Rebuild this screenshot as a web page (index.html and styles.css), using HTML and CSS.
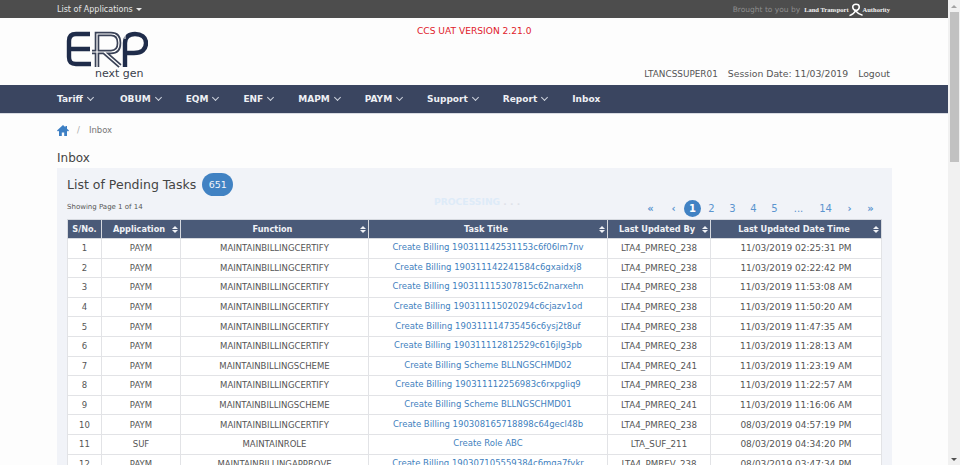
FILE: index.html
```html
<!DOCTYPE html>
<html lang="en">
<head>
  <meta charset="UTF-8" />
  <title>Inbox</title>
  <link rel="stylesheet" href="styles.css">
</head>
<body>
<div class="window">
  <div class="page">
    <div class="topbar">
      <span class="app-list">List of Applications <i class="caret"></i></span>
      <span class="brought">Brought to you by
        <span class="lta">Land Transport
          <svg class="lta-mark" width="14" height="15" viewBox="0 0 16 15">
            <path d="M8 9C3 7 3 1.5 8 1.5S13 7 8 9" fill="none" stroke="#fff" stroke-width="1.7"/>
            <path d="M0.5 14.5C4 13.5 6.5 11 8.5 8M15.5 14C11.5 13 9 11 6.5 8" fill="none" stroke="#fff" stroke-width="1.7"/>
          </svg>Authority</span>
      </span>
    </div>

    <header class="masthead">
      <div class="logo">
        <svg width="82" height="38" viewBox="0 0 82 38">
          <path d="M24 3H10C5 3 3 6 3 10V26C3 31 5 33 10 33H25M3 18H24" fill="none" stroke="#1f2c4a" stroke-width="4.4"/>
          <path d="M31 36V3H45C50 3 53 6 53 12S50 21 45 21H26M38 21L54 35" fill="none" stroke="#3a4257" stroke-width="4.6"/>
          <path d="M31 36V3H45C50 3 53 6 53 12S50 21 45 21H26M38 21L54 35" fill="none" stroke="#fff" stroke-width="1.2"/>
          <path d="M59 36V12C59 6 63 3 69 3S80 6 80 12 76 22 68 22H60" fill="none" stroke="#1f2c4a" stroke-width="4.4"/>
          <path d="M59 8V1" stroke="#fff" stroke-width="1"/>
        </svg>
        <span class="logo-sub">next gen</span>
      </div>
      <div class="version">CCS UAT VERSION 2.21.0</div>
      <div class="session">
        <span class="user">LTANCSSUPER01</span>
        <span>Session Date: 11/03/2019</span>
        <span>Logout</span>
      </div>
    </header>

    <nav class="mainnav">
      <a class="has-sub">Tariff</a>
      <a class="has-sub">OBUM</a>
      <a class="has-sub">EQM</a>
      <a class="has-sub">ENF</a>
      <a class="has-sub">MAPM</a>
      <a class="has-sub">PAYM</a>
      <a class="has-sub">Support</a>
      <a class="has-sub">Report</a>
      <a>Inbox</a>
    </nav>

    <main class="content">
      <div class="breadcrumb">
        <svg width="12" height="11" viewBox="0 0 12 11"><path d="M6 0L0 5.6 1 6.6 2 5.7V11H4.8V7.4H7.2V11H10V5.7L11 6.6 12 5.6 10 3.7V1H8.4V2.3Z" fill="#3d7fc4"/></svg>
        <span class="sep">/</span>
        <span>Inbox</span>
      </div>
      <h1 class="page-title">Inbox</h1>

      <section class="panel">
        <div class="panel-head">
          <h2>List of Pending Tasks</h2>
          <span class="count">651</span>
        </div>
        <div class="table-tools">
          <span class="showing">Showing Page 1 of 14</span>
          <span class="processing">PROCESSING <span class="dots">. . .</span></span>
          <div class="pager">
            <a class="nav first">«</a><a class="nav">‹</a><a class="current">1</a><a>2</a><a>3</a><a>4</a><a>5</a><a class="wide">...</a><a class="wide">14</a><a class="nav">›</a><a class="nav">»</a>
          </div>
        </div>
        <table class="tasks">
          <colgroup>
            <col class="c-no"><col class="c-app"><col class="c-fn"><col class="c-title"><col class="c-by"><col class="c-date">
          </colgroup>
          <thead>
            <tr>
              <th>S/No.</th>
              <th class="sort">Application</th>
              <th class="sort">Function</th>
              <th class="sort">Task Title</th>
              <th class="sort">Last Updated By</th>
              <th class="sort">Last Updated Date Time</th>
            </tr>
          </thead>
          <tbody>
            <tr><td>1</td><td>PAYM</td><td>MAINTAINBILLINGCERTIFY</td><td><a>Create Billing 190311142531153c6f06lm7nv</a></td><td class="by">LTA4_PMREQ_238</td><td class="when">11/03/2019 02:25:31 PM</td></tr>
            <tr><td>2</td><td>PAYM</td><td>MAINTAINBILLINGCERTIFY</td><td><a>Create Billing 190311142241584c6gxaidxj8</a></td><td class="by">LTA4_PMREQ_238</td><td class="when">11/03/2019 02:22:42 PM</td></tr>
            <tr><td>3</td><td>PAYM</td><td>MAINTAINBILLINGCERTIFY</td><td><a>Create Billing 190311115307815c62narxehn</a></td><td class="by">LTA4_PMREQ_238</td><td class="when">11/03/2019 11:53:08 AM</td></tr>
            <tr><td>4</td><td>PAYM</td><td>MAINTAINBILLINGCERTIFY</td><td><a>Create Billing 190311115020294c6cjazv1od</a></td><td class="by">LTA4_PMREQ_238</td><td class="when">11/03/2019 11:50:20 AM</td></tr>
            <tr><td>5</td><td>PAYM</td><td>MAINTAINBILLINGCERTIFY</td><td><a>Create Billing 190311114735456c6ysj2t8uf</a></td><td class="by">LTA4_PMREQ_238</td><td class="when">11/03/2019 11:47:35 AM</td></tr>
            <tr><td>6</td><td>PAYM</td><td>MAINTAINBILLINGCERTIFY</td><td><a>Create Billing 190311112812529c616jlg3pb</a></td><td class="by">LTA4_PMREQ_238</td><td class="when">11/03/2019 11:28:13 AM</td></tr>
            <tr><td>7</td><td>PAYM</td><td>MAINTAINBILLINGSCHEME</td><td><a>Create Billing Scheme BLLNGSCHMD02</a></td><td class="by">LTA4_PMREQ_241</td><td class="when">11/03/2019 11:23:19 AM</td></tr>
            <tr><td>8</td><td>PAYM</td><td>MAINTAINBILLINGCERTIFY</td><td><a>Create Billing 190311112256983c6rxpgliq9</a></td><td class="by">LTA4_PMREQ_238</td><td class="when">11/03/2019 11:22:57 AM</td></tr>
            <tr><td>9</td><td>PAYM</td><td>MAINTAINBILLINGSCHEME</td><td><a>Create Billing Scheme BLLNGSCHMD01</a></td><td class="by">LTA4_PMREQ_241</td><td class="when">11/03/2019 11:16:06 AM</td></tr>
            <tr><td>10</td><td>PAYM</td><td>MAINTAINBILLINGCERTIFY</td><td><a>Create Billing 190308165718898c64gecl48b</a></td><td class="by">LTA4_PMREQ_238</td><td class="when">08/03/2019 04:57:19 PM</td></tr>
            <tr><td>11</td><td>SUF</td><td>MAINTAINROLE</td><td><a>Create Role ABC</a></td><td class="by">LTA_SUF_211</td><td class="when">08/03/2019 04:34:20 PM</td></tr>
            <tr><td>12</td><td>PAYM</td><td>MAINTAINBILLINGAPPROVE</td><td><a>Create Billing 190307105559384c6mqa7fvkr</a></td><td class="by">LTA4_PMREV_238</td><td class="when">08/03/2019 03:47:34 PM</td></tr>
          </tbody>
        </table>
      </section>
    </main>
  </div>

  <div class="scrollbar">
    <span class="arrow up"></span>
    <div class="track"><div class="thumb"></div></div>
    <span class="arrow down"></span>
  </div>
</div>
</body>
</html>
```

FILE: styles.css
```css
html, body {
  margin: 0;
  height: 100%;
  overflow: hidden;
}
body {
  font-family: "DejaVu Sans", sans-serif;
  font-size: 8.5px;
  color: #444;
  background: #fdfdfd;
}
.window {
  display: flex;
  height: 465px;
}
.page {
  flex: 1;
  min-width: 0;
  overflow: hidden;
}

/* top strip */
.topbar {
  height: 17px;
  background: #4d4d4d;
  border-bottom: 1px solid #a8a8a8;
  padding: 1px 58px 0 57px;
  margin-bottom: -1px;
  display: flex;
  justify-content: space-between;
  align-items: center;
  font-size: 8px;
  color: #e6e6e6;
}
.caret {
  display: inline-block;
  margin-left: 1px;
  vertical-align: 1px;
  border: 3px solid transparent;
  border-top-color: #e6e6e6;
  border-bottom: 0;
}
.brought {
  display: flex;
  align-items: center;
  font-size: 7.5px;
  color: #8d8d8d;
}
.lta {
  display: flex;
  align-items: center;
  margin-left: 4px;
  font-family: "Liberation Serif", serif;
  font-weight: bold;
  font-size: 6.5px;
  color: #f2f2f2;
}

/* logo + session row */
.masthead {
  height: 67px;
  position: relative;
  display: flex;
  justify-content: space-between;
  background: #fdfdfd;
  padding: 0 58px 0 66px;
}
.logo {
  width: 82px;
  padding-top: 13px;
  line-height: 0;
}
.logo-sub {
  display: block;
  margin: -1px 0 0 29px;
  font-size: 11px;
  line-height: 11px;
  color: #3a3f4c;
}
.version {
  position: absolute;
  left: 417px;
  top: 8px;
  font-size: 9.1px;
  color: #e0202a;
}
.session {
  display: flex;
  gap: 10px;
  align-self: flex-end;
  align-items: baseline;
  padding-bottom: 6px;
  font-size: 9.3px;
  color: #555;
}
.session .user {
  font-size: 8.9px;
}

.mainnav {
  height: 28px;
  background: #3a4560;
  border-bottom: 1px solid #d8dbe2;
  display: flex;
  align-items: center;
  padding-left: 57px;
  gap: 24px;
  font-size: 9px;
  font-weight: bold;
  color: #eef0f4;
}
.mainnav a:first-child {
  margin-right: 2px;
}
.has-sub::after {
  content: "";
  display: inline-block;
  width: 4px;
  height: 4px;
  margin: 0 1px 2px 5px;
  border-right: 1px solid #cfd4de;
  border-bottom: 1px solid #cfd4de;
  transform: rotate(45deg);
}

.content {
  padding: 9px 56px 0 57px;
}
.breadcrumb {
  display: flex;
  align-items: center;
  height: 14px;
  font-size: 8.5px;
  color: #777;
}
.breadcrumb .sep {
  margin: 0 9px 0 8px;
  color: #aaa;
}
.page-title {
  margin: 12px 0 1px;
  font-size: 12px;
  line-height: 18px;
  font-weight: normal;
  color: #444;
}

.panel {
  background: #f1f3f8;
  padding: 5px 11px 12px 10px;
}
.panel-head {
  display: flex;
  align-items: center;
  gap: 6px;
}
.panel-head h2 {
  margin: 0;
  font-size: 12.5px;
  font-weight: normal;
  color: #444;
}
.count {
  width: 31px;
  height: 23px;
  border-radius: 12px;
  background: #4182c3;
  color: #f2f5fa;
  font-size: 9.5px;
  line-height: 23px;
  text-align: center;
}
.table-tools {
  position: relative;
  display: flex;
  justify-content: space-between;
  align-items: flex-end;
  height: 23px;
  padding-bottom: 2px;
  box-sizing: border-box;
}
.showing {
  font-size: 7px;
  padding-bottom: 6px;
  color: #555;
}
.processing {
  position: absolute;
  left: 367px;
  top: 0;
  white-space: nowrap;
  font-size: 9.2px;
  font-weight: bold;
  color: #deebf8;
}
.processing .dots {
  color: #dfe2e9;
}
.pager {
  display: flex;
  align-items: center;
  color: #5b95cf;
  font-size: 10px;
}
.pager a {
  width: 21px;
  text-align: center;
}
.pager .nav {
  font-weight: bold;
}
.pager .first {
  margin-right: 2px;
}
.pager .wide {
  width: 27px;
}
.pager .current {
  width: 17px;
  height: 17px;
  line-height: 17px;
  border-radius: 50%;
  background: #4182c3;
  color: #fff;
  font-weight: bold;
}

.tasks {
  width: 814px;
  table-layout: fixed;
  border-collapse: collapse;
  background: #fff;
  text-align: center;
}
.c-no { width: 34px; }
.c-app { width: 79px; }
.c-fn { width: 188px; }
.c-title { width: 239px; }
.c-by { width: 103px; }
.c-date { width: 171px; }
.tasks th {
  height: 18px;
  padding: 0;
  position: relative;
  background: #4a5a78;
  border: 1px solid #d6d9df;
  color: #f0f2f6;
  font-size: 8.2px;
}
.tasks .sort {
  padding-right: 4px;
}
.tasks .sort::before,
.tasks .sort::after {
  content: "";
  position: absolute;
  right: 2px;
  border: 3px solid transparent;
}
.tasks .sort::before {
  top: 6px;
  border-top: 0;
  border-bottom-color: #f0f2f6;
}
.tasks .sort::after {
  top: 10px;
  border-bottom: 0;
  border-top-color: #f0f2f6;
}
.tasks td {
  height: 18.6px;
  padding: 0;
  border: 1px solid #e2e3e6;
  font-size: 8.5px;
  color: #555;
}
.tasks td.by {
  font-size: 8.7px;
}
.tasks td.when {
  font-size: 9px;
}
.tasks td a {
  color: #3f7fbe;
  position: relative;
  top: -1px;
}

.scrollbar {
  width: 12px;
  background: #f1f1f1;
  display: flex;
  flex-direction: column;
  align-items: center;
}
.arrow {
  flex: none;
  width: 0;
  height: 3px;
  border: 3px solid transparent;
  box-sizing: border-box;
}
.arrow.up {
  border-top: 0;
  border-bottom-color: #a3a3a3;
  margin: 5px 0 4px;
}
.arrow.down {
  border-bottom: 0;
  border-top-color: #505050;
  margin: 3px 0 4px;
}
.track {
  flex: 1;
  width: 9px;
}
.thumb {
  height: 150px;
  background: #c1c1c1;
}
```
